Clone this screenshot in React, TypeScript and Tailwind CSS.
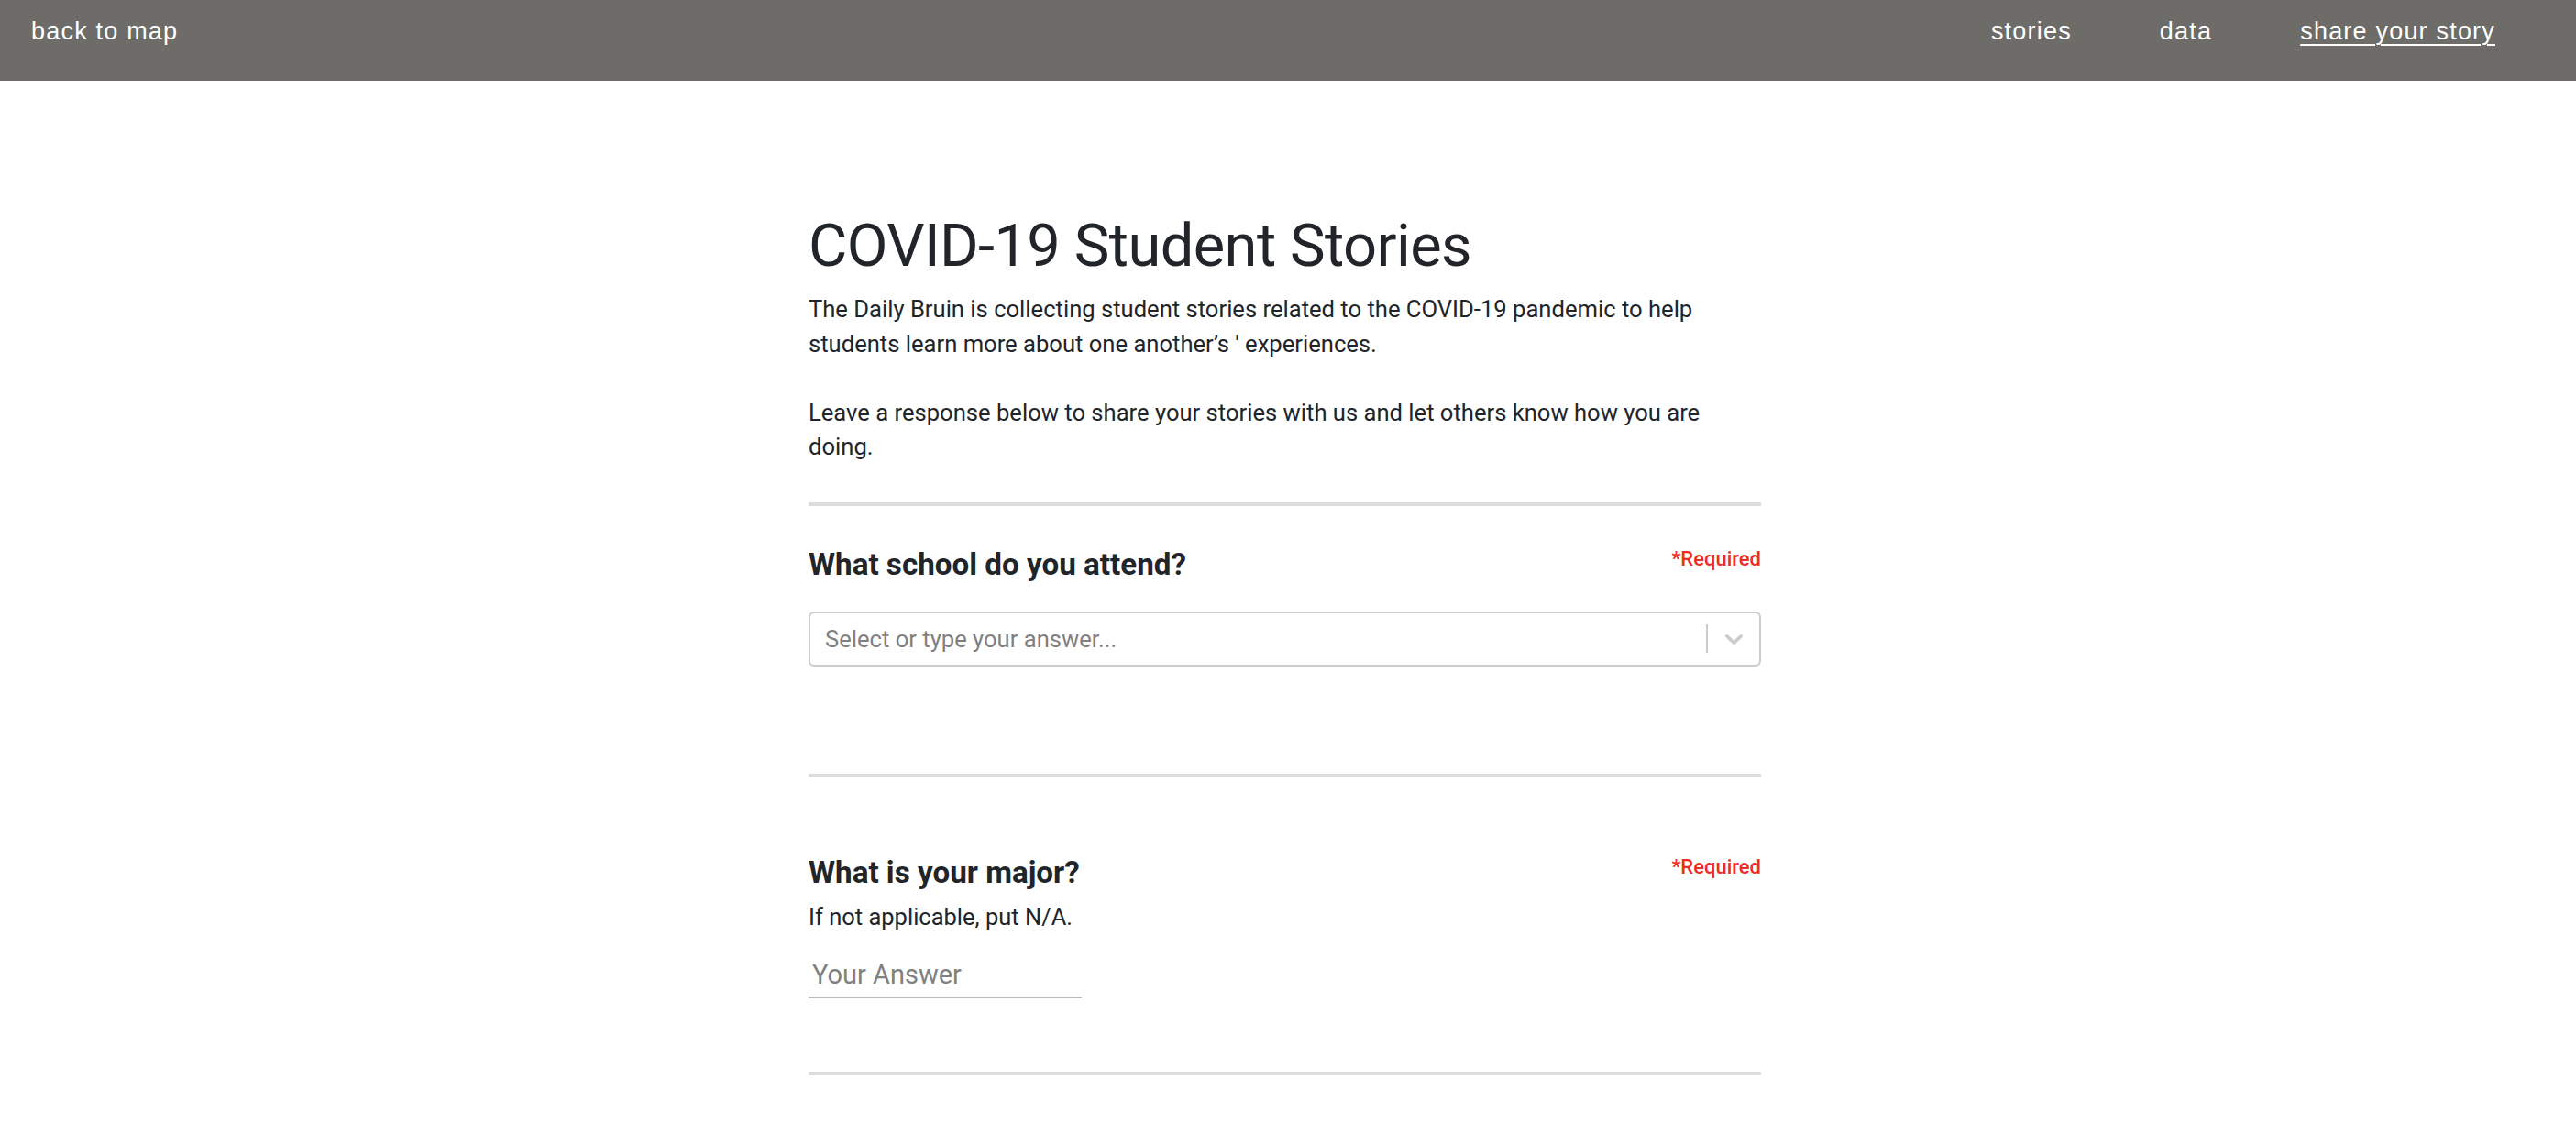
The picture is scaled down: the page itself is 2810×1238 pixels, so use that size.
import React from "react";

const NavBar: React.FC = () => {
    return (
        <div className="h-[88px] bg-[#6d6c68] flex justify-between items-start pt-[19px] pl-[34px] pr-[88px] text-white font-['Liberation_Sans',sans-serif] text-[27px] leading-[30px] tracking-[1.2px]">
            <a className="cursor-pointer">back to map</a>
            <div className="flex gap-[96px]">
                <a className="cursor-pointer">stories</a>
                <a className="cursor-pointer">data</a>
                <a className="cursor-pointer underline underline-offset-[5px] decoration-2">share your story</a>
            </div>
        </div>
    );
};

const Required: React.FC = () => (
    <span className="text-[#ee2b24] text-[22px] leading-[28px] font-medium">*Required</span>
);

const Divider: React.FC = () => <div className="h-[4px] bg-[#dcdcdc]" />;

const App: React.FC = () => {
    return (
        <div className="min-h-screen bg-white font-['Roboto',sans-serif] text-[#212529]">
            <NavBar />
            <div className="flex justify-center pr-[7px]">
                <div className="w-[1039px] flex-col flex">
                    <h1 className="mt-[141px] text-[65px] leading-[79px] tracking-[-0.6px] font-normal">COVID-19 Student Stories</h1>
                    <div className="mt-[11px] text-[25.6px] leading-[37.6px]">
                        <p>The Daily Bruin is collecting student stories related to the COVID-19 pandemic to help students learn more about one another’s ' experiences.</p>
                        <p className="mt-[37.6px]">Leave a response below to share your stories with us and let others know how you are doing.</p>
                    </div>

                    <div className="mt-[41px]">
                        <Divider />
                    </div>

                    {/* question 1 */}
                    <div className="mt-[44px] flex justify-between items-start">
                        <h2 className="text-[33.2px] leading-[40px] font-bold">What school do you attend?</h2>
                        <Required />
                    </div>
                    <div className="mt-[31px] h-[60px] border-2 border-[#cccccc] rounded-[6px] flex items-center">
                        <div className="grow pl-[16px] text-[25.6px] leading-[30px] text-[#808080]">Select or type your answer...</div>
                        <div className="w-[2px] h-[31px] bg-[#cccccc]" />
                        <div className="w-[56px] flex justify-center items-center text-[#cccccc]">
                            <svg width="33" height="33" viewBox="0 0 20 20" fill="currentColor">
                                <path d="M4.516 7.548c0.436-0.446 1.043-0.481 1.576 0l3.908 3.747 3.908-3.747c0.533-0.481 1.141-0.446 1.574 0 0.436 0.445 0.408 1.197 0 1.615-0.406 0.418-4.695 4.502-4.695 4.502-0.217 0.223-0.502 0.335-0.787 0.335s-0.57-0.112-0.789-0.335c0 0-4.287-4.084-4.695-4.502s-0.436-1.17 0-1.615z" />
                            </svg>
                        </div>
                    </div>

                    <div className="mt-[117px]">
                        <Divider />
                    </div>

                    {/* question 2 */}
                    <div className="mt-[84px] flex justify-between items-start">
                        <h2 className="text-[33.2px] leading-[40px] font-bold">What is your major?</h2>
                        <Required />
                    </div>
                    <div className="mt-[13px] text-[25.5px] leading-[30px]">If not applicable, put N/A.</div>
                    <div className="mt-[32px] w-[298px] border-b-2 border-[#b8b8b8] pl-[4px] pb-[7px] text-[29px] leading-[33px] text-[#808080]">
                        Your Answer
                    </div>

                    <div className="mt-[80px]">
                        <Divider />
                    </div>
                    <div className="h-[200px]" />
                </div>
            </div>
        </div>
    );
};

export default App;
